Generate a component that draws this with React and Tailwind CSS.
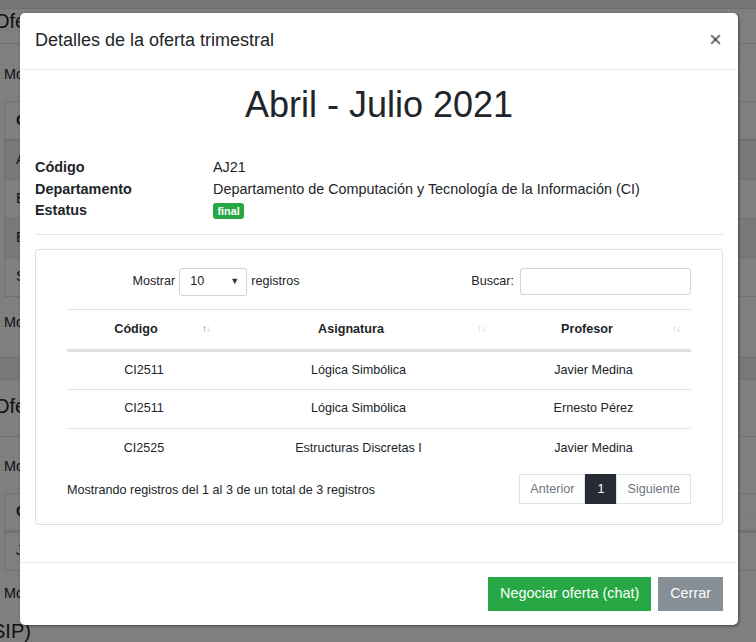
import { X } from 'lucide-react'

const rows = [
  ['CI2511', 'Lógica Simbólica', 'Javier Medina'],
  ['CI2511', 'Lógica Simbólica', 'Ernesto Pérez'],
  ['CI2525', 'Estructuras Discretas I', 'Javier Medina'],
]

function SortIcon({ active }) {
  return (
    <span className="absolute right-[11px] top-[14px] text-[10px] leading-none tracking-[-1px]">
      <span className={active ? 'text-[#b9705f]' : 'text-[#cfcfcf]'}>↑</span>
      <span className="text-[#cfcfcf]">↓</span>
    </span>
  )
}

function BackgroundPage() {
  return (
    <div className="absolute inset-0 bg-white text-[14.4px] text-[#212529]">
      <div className="h-[9px] bg-[#efefef] border-b border-[#dcdcdc]" />

      {/* first section */}
      <div className="h-[35px] border-b border-[#dee2e6]">
        <div className="-ml-[6px] text-[20px] leading-[24px]">Ofertas</div>
      </div>
      <div className="pl-[4px] pt-[20px] leading-[21.6px]">Mostrar</div>
      <table className="ml-[4px] mt-[15px] w-[800px] border border-[#dee2e6] border-collapse">
        <thead>
          <tr className="h-[39px] border-b-2 border-[#dee2e6]">
            <th className="pl-[11px] text-left font-bold">Código</th>
            <th />
          </tr>
        </thead>
        <tbody>
          <tr className="h-[39px] bg-[#f2f2f2] border-b border-[#dee2e6]"><td className="pl-[11px]">AJ</td><td /></tr>
          <tr className="h-[39px] border-b border-[#dee2e6]"><td className="pl-[11px]">EM</td><td /></tr>
          <tr className="h-[39px] bg-[#f2f2f2] border-b border-[#dee2e6]"><td className="pl-[11px]">EM</td><td /></tr>
          <tr className="h-[39px]"><td className="pl-[11px]">SD</td><td /></tr>
        </tbody>
      </table>
      <div className="pl-[4px] mt-[15px] leading-[21.6px]">Mostrando</div>
      <div className="mt-[24px] h-[23px] bg-[#f0f0f0] border-y border-[#dee2e6]" />

      {/* second section */}
      <div className="h-[57px] border-b border-[#dee2e6] flex items-center">
        <div className="-ml-[6px] text-[20px] leading-[24px] mt-[-4px]">Ofertas</div>
      </div>
      <div className="pl-[4px] pt-[19px] leading-[21.6px]">Mostrar</div>
      <table className="ml-[4px] mt-[15px] w-[800px] border border-[#dee2e6] border-collapse">
        <thead>
          <tr className="h-[38px] border-b-[3px] border-[#dee2e6]">
            <th className="pl-[11px] text-left font-bold w-[736px] relative">
              Código
              <span className="absolute right-[-14px] top-[12px] text-[10px] text-[#cfcfcf]">↑</span>
            </th>
            <th />
          </tr>
        </thead>
        <tbody>
          <tr className="h-[39px]"><td className="pl-[11px]">JM</td><td /></tr>
        </tbody>
      </table>
      <div className="pl-[4px] mt-[12px] leading-[21.6px]">Mostrando</div>
      <div className="-ml-[8px] mt-[15px] text-[20px] leading-[24px]">SIP)</div>
    </div>
  )
}

export default function App() {
  return (
    <div className="relative h-[642px] w-full overflow-hidden font-['Liberation_Sans',Arial,sans-serif]">
      <BackgroundPage />
      <div className="absolute inset-0 bg-black/50" />

      <div className="absolute inset-0 flex justify-center items-start pt-[13px] pl-[2px]">
        <div className="w-[718px] bg-white rounded-[5px] shadow-[1px_1px_3px_rgba(0,0,0,0.45)] text-[14.4px] text-[#212529] flex flex-col">
          {/* header */}
          <div className="flex items-start justify-between px-[15px] pt-[14px] pb-[15px] border-b border-[#e9ecef]">
            <h5 className="text-[18px] leading-[27px]">Detalles de la oferta trimestral</h5>
            <button className="mt-[5px] text-black/50" aria-label="Close">
              <X className="w-[15px] h-[15px]" strokeWidth={3.6} />
            </button>
          </div>

          {/* body */}
          <div className="px-[15px] pt-[13px] pb-[37px]">
            <h1 className="text-center text-[36px] leading-[43px]">Abril - Julio 2021</h1>

            <div className="mt-[31px] grid grid-cols-[178px_1fr] leading-[21.6px]">
              <div className="font-bold">Código</div>
              <div>AJ21</div>
              <div className="font-bold">Departamento</div>
              <div>Departamento de Computación y Tecnología de la Información (CI)</div>
              <div className="font-bold">Estatus</div>
              <div className="flex items-center">
                <span className="bg-[#28a745] text-white font-bold text-[10.8px] leading-[16px] h-[16px] px-[4.5px] rounded-[3px] mt-[1px]">
                  final
                </span>
              </div>
            </div>

            <div className="mt-[12px] border-t border-[#e5e5e5]" />

            {/* card */}
            <div className="mt-[14px] border border-[#dfdfdf] rounded-[3px] px-[31px] pt-[18px] pb-[20px] text-[12.6px]">
              <div className="flex items-center h-[28px]">
                <div className="w-1/2 flex items-center justify-center pr-[14px] gap-[4px]">
                  <span>Mostrar</span>
                  <div className="w-[68px] h-[28px] border border-[#ced4da] rounded-[3px] flex items-center justify-between pl-[10px] pr-[7px]">
                    <span>10</span>
                    <span className="text-[9px] text-[#333]">▼</span>
                  </div>
                  <span>registros</span>
                </div>
                <div className="w-1/2 flex items-center justify-end gap-[6px]">
                  <span>Buscar:</span>
                  <div className="w-[171px] h-[27px] border border-[#ced4da] rounded-[3px]" />
                </div>
              </div>

              <table className="mt-[13px] w-full table-fixed border-collapse">
                <colgroup>
                  <col className="w-[154px]" />
                  <col className="w-[275px]" />
                  <col className="w-[195px]" />
                </colgroup>
                <thead>
                  <tr className="h-[41px] border-t border-b-[3px] border-[#dee2e6]">
                    <th className="relative pl-[12px] pr-[28px] text-center font-bold">
                      Código
                      <SortIcon active />
                    </th>
                    <th className="relative pl-[12px] pr-[27px] text-center font-bold">
                      Asignatura
                      <SortIcon />
                    </th>
                    <th className="relative pl-[12px] pr-[25px] text-center font-bold">
                      Profesor
                      <SortIcon />
                    </th>
                  </tr>
                </thead>
                <tbody>
                  {rows.map((r, i) => (
                    <tr key={i} className={`h-[39px] ${i > 0 ? 'border-t border-[#dee2e6]' : ''}`}>
                      <td className="text-center px-[12px]">{r[0]}</td>
                      <td className="text-center px-[12px]">{r[1]}</td>
                      <td className="text-center px-[12px]">{r[2]}</td>
                    </tr>
                  ))}
                </tbody>
              </table>

              <div className="mt-[7px] flex items-center justify-between">
                <span className="pt-[3px]">Mostrando registros del 1 al 3 de un total de 3 registros</span>
                <div className="flex h-[30px]">
                  <span className="px-[10px] flex items-center border border-[#dee2e6] text-[#6c757d]">Anterior</span>
                  <span className="px-[11px] flex items-center bg-[#272b33] border border-[#272b33] text-white">1</span>
                  <span className="px-[10px] flex items-center border border-[#dee2e6] text-[#6c757d]">Siguiente</span>
                </div>
              </div>
            </div>
          </div>

          {/* footer */}
          <div className="flex justify-end gap-[7px] px-[15px] pt-[14px] pb-[14px] border-t border-[#e9ecef]">
            <button className="h-[34px] px-[12px] bg-[#28a745] text-white leading-[21.6px]">Negociar oferta (chat)</button>
            <button className="h-[34px] px-[12px] bg-[#868e96] text-white leading-[21.6px]">Cerrar</button>
          </div>
        </div>
      </div>
    </div>
  )
}
